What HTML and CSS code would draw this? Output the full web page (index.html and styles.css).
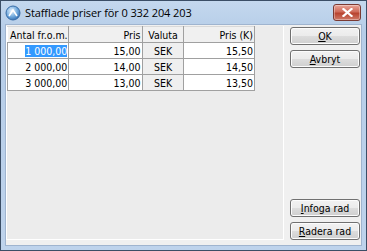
FILE: index.html
```html
<!DOCTYPE html>
<html>
<head>
<meta charset="utf-8">
<link rel="stylesheet" href="styles.css">
</head>
<body>
<div class="window">
  <div class="titlebar">
    <svg class="app-icon" width="16" height="16" viewBox="0 0 16 16">
      <defs>
        <radialGradient id="g" cx="0.4" cy="0.35" r="0.7">
          <stop offset="0" stop-color="#e8f4ff"/>
          <stop offset="0.6" stop-color="#6fa8dc"/>
          <stop offset="1" stop-color="#2f6bb0"/>
        </radialGradient>
      </defs>
      <circle cx="8" cy="8" r="7" fill="url(#g)" stroke="#3a6ea8" stroke-width="1"/>
      <path d="M4 11 L8 5 L12 11" fill="none" stroke="#ffffff" stroke-width="1.6"/>
    </svg>
    <span class="title">Stafflade priser för 0 332 204 203</span>
    <div class="close-btn">
      <svg width="11" height="9" viewBox="0 0 11 9">
        <path d="M1.5 1 L9.5 8 M9.5 1 L1.5 8" stroke="#ffffff" stroke-width="2.2" stroke-linecap="square"/>
      </svg>
    </div>
  </div>
  <div class="client">
    <div class="grid">
      <table class="table">
        <thead>
          <tr>
            <th class="c1">Antal fr.o.m.</th>
            <th class="c2">Pris</th>
            <th class="c3">Valuta</th>
            <th class="c4">Pris (K)</th>
          </tr>
        </thead>
        <tbody>
          <tr>
            <td class="c1"><span class="sel">1 000,00</span></td>
            <td class="c2">15,00</td>
            <td class="c3 ro">SEK</td>
            <td class="c4">15,50</td>
          </tr>
          <tr>
            <td class="c1">2 000,00</td>
            <td class="c2">14,00</td>
            <td class="c3 ro">SEK</td>
            <td class="c4">14,50</td>
          </tr>
          <tr>
            <td class="c1">3 000,00</td>
            <td class="c2">13,00</td>
            <td class="c3 ro">SEK</td>
            <td class="c4">13,50</td>
          </tr>
        </tbody>
      </table>
    </div>
    <div class="buttons">
      <div class="group">
        <button class="btn"><u>O</u>K</button>
        <button class="btn"><u>A</u>vbryt</button>
      </div>
      <div class="group">
        <button class="btn"><u>I</u>nfoga rad</button>
        <button class="btn"><u>R</u>adera rad</button>
      </div>
    </div>
  </div>
</div>
</body>
</html>
```

FILE: styles.css
```css
html, body {
  margin: 0;
  padding: 0;
  background: #ffffff;
}
.window {
  width: 367px;
  height: 251px;
  box-sizing: border-box;
  border: 1px solid #3b4e66;
  background: linear-gradient(#c4d8ee, #b6cde8 30px, #bed3ec);
  display: flex;
  flex-direction: column;
  font-family: Tahoma, "DejaVu Sans Condensed", "DejaVu Sans", sans-serif;
  font-size: 10.5px;
}
.titlebar {
  height: 23px;
  display: flex;
  align-items: center;
  padding: 0 5px 0 4px;
  flex: none;
}
.app-icon {
  flex: none;
  margin-right: 4px;
}
.title {
  font-family: "Open Sans", "Noto Sans", sans-serif;
  font-size: 11px;
  color: #000000;
  flex: 1;
  letter-spacing: -0.1px;
}
.close-btn {
  width: 26px;
  height: 15px;
  margin-top: 0;
  border: 1px solid #7a3a33;
  border-radius: 3px;
  background: linear-gradient(#e9a598, #cf6b5a 45%, #b8432f 55%, #cf7a68);
  display: flex;
  align-items: center;
  justify-content: center;
  box-shadow: inset 0 0 0 1px rgba(255,255,255,0.35);
}
.client {
  flex: 1;
  margin: 0 4px 4px 4px;
  background: #f0f0f0;
  border: 1px solid #9fb4cf;
  display: flex;
  padding: 1px 0 4px 0;
  gap: 6px;
}
.grid {
  width: 276px;
  background: #ececec;
  border-right: 1px solid #ffffff;
  border-bottom: 1px solid #ffffff;
  border-left: 1px solid #ffffff;
  margin-bottom: 1px;
}
.table {
  border-collapse: collapse;
  table-layout: fixed;
  width: 248px;
}
.table th, .table td {
  height: 15px;
  padding: 0 1px 0 2px;
  text-align: right;
  font-weight: normal;
  white-space: nowrap;
  overflow: hidden;
  color: #000000;
  border: 1px solid #a0a0a0;
  line-height: 14px;
}
.table th {
  background: #f0f0f0;
  border-top: 1px solid #d8d8d8;
  border-left: 1px solid #ffffff;
}
.table td {
  background: #ffffff;
}
.table td.ro {
  background: #efefef;
  text-align: center;
}
.table th.c3 {
  text-align: center;
}
.c1 { width: 57px; }
.c2 { width: 69px; }
.c3 { width: 37px; }
.c4 { width: 67px; }
.sel {
  background: #3399ff;
  color: #ffffff;
}
.buttons {
  width: 70px;
  display: flex;
  flex-direction: column;
  justify-content: space-between;
  padding-top: 1px;
  padding-bottom: 1px;
}
.group {
  display: flex;
  flex-direction: column;
  gap: 5px;
}
.btn {
  width: 70px;
  height: 18px;
  padding: 0;
  font-family: Tahoma, "DejaVu Sans Condensed", "DejaVu Sans", sans-serif;
  font-size: 10.5px;
  color: #000000;
  border: 1px solid #707070;
  border-radius: 3px;
  background: linear-gradient(#f2f2f2, #ebebeb 50%, #dddddd 50%, #cfcfcf);
  box-shadow: inset 0 0 0 1px #fcfcfc;
}
```
